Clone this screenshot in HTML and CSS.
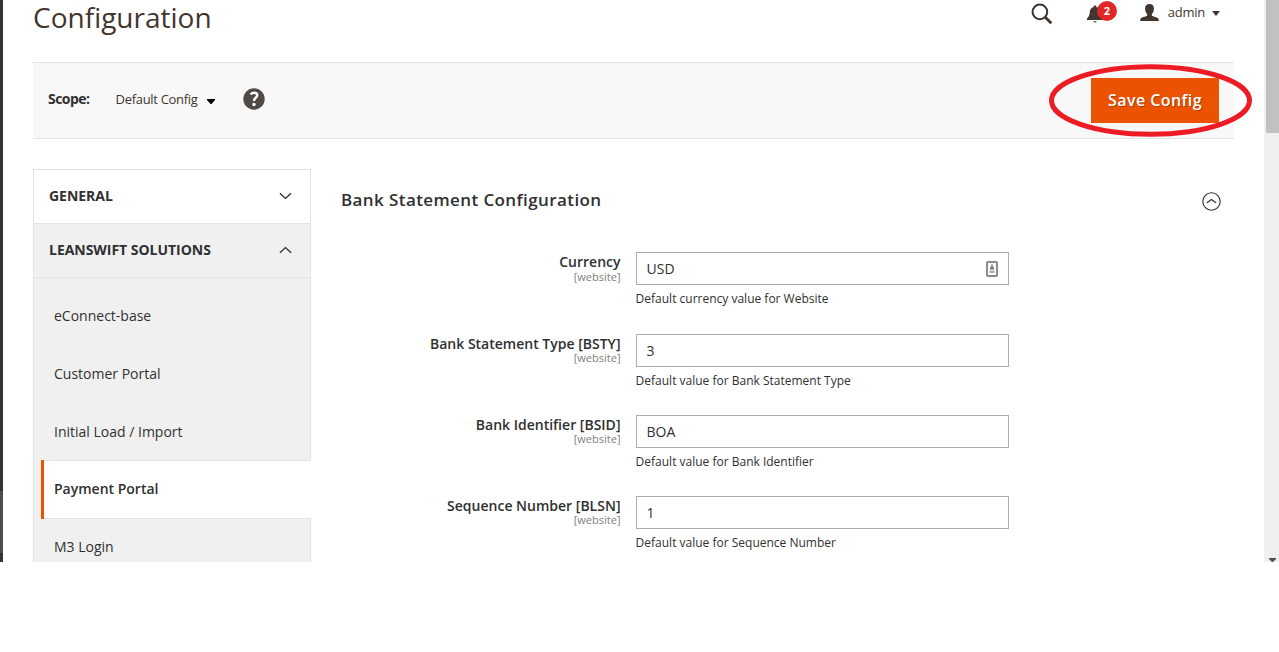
FILE: index.html
```html
<!DOCTYPE html>
<html lang="en">
<head>
<meta charset="utf-8">
<title>Configuration</title>
<link rel="stylesheet" href="styles.css">
</head>
<body>
<div class="app">
  <div class="menu-edge"><div class="menu-edge-active"></div></div>
  <div class="page">
    <header class="header">
      <h1 class="title"><span>Configuration</span></h1>
      <div class="tools">
        <svg class="icon-search" width="22" height="22" viewBox="0 0 22 22"><circle cx="8.9" cy="8.9" r="7.3" fill="none" stroke="#41362f" stroke-width="2"/><path d="M14 14l6.3 6.2" stroke="#41362f" stroke-width="2.8"/></svg>
        <div class="bell">
          <svg width="17" height="18" viewBox="0 0 17 18"><path d="M8 .5c-1 0-1.400.6-1.400 1.400C4 2.500 2.800 4.700 2.700 7.500C2.600 10.500 1.500 12 0 13.200v1.800h16v-1.800C14.500 12 13.400 10.500 13.300 7.500C13.200 4.700 12 2.500 9.400 1.900C9.400 1.100 9 .5 8 .5zM6.300 16.200c.3.800.9 1.200 1.700 1.200s1.400-.4 1.700-1.200z" fill="#41362f"/></svg>
          <span class="badge">2</span>
        </div>
        <svg class="icon-user" width="19" height="17" viewBox="0 0 19 17.300"><path d="M9.500 0C6.500 0 5 1.700 5 4.500C5 7 5.800 9 7.100 10.200v1.700C5.500 13 1 13.300.3 15.200L0 17.300h19l-.3-2.100C18 13.300 13.500 13 11.900 11.900v-1.700C13.200 9 14 7 14 4.500C14 1.700 12.500 0 9.500 0z" fill="#41362f"/></svg>
        <span class="user-name"><span>admin</span></span>
        <svg class="caret-user" width="8" height="5" viewBox="0 0 8 5"><path d="M0 0h8L4 5z" fill="#41362f"/></svg>
      </div>
    </header>

    <div class="toolbar">
      <span class="scope-label"><span>Scope:</span></span>
      <span class="scope-value"><span>Default Config</span></span>
      <svg class="caret-scope" width="8" height="5" viewBox="0 0 8 5"><path d="M0 0h8v1L4.500 5h-1L0 1z" fill="#000"/></svg>
      <svg class="help" width="22" height="22" viewBox="0 0 22 22"><circle cx="11" cy="11" r="10.700" fill="#514943"/><path d="M7.600 6.300C8.500 5.400 9.700 4.800 11.100 4.800c2 0 3.100 1 3.100 2.500c0 1.300-.7 2-1.700 2.700c-.9.700-1.400 1.200-1.400 2.500v.6" fill="none" stroke="#fff" stroke-width="2.500"/><circle cx="11" cy="16.500" r="1.700" fill="#fff"/></svg>
      <div class="save-wrap">
        <button class="save"><span>Save Config</span></button>
        <svg class="marker" width="204" height="74" viewBox="0 0 204 74"><ellipse cx="101.500" cy="36.500" rx="99" ry="33.700" fill="none" stroke="#ed1c24" stroke-width="5"/></svg>
      </div>
    </div>

    <div class="columns">
      <nav class="sidebar">
        <div class="section">
          <span>GENERAL</span>
          <svg width="13" height="8" viewBox="0 0 14 8"><path d="M1 1l6 5.600L13 1" fill="none" stroke="#303030" stroke-width="1.500"/></svg>
        </div>
        <div class="section open">
          <span>LEANSWIFT SOLUTIONS</span>
          <svg width="13" height="8" viewBox="0 0 14 8"><path d="M1 7l6-5.600L13 7" fill="none" stroke="#303030" stroke-width="1.500"/></svg>
        </div>
        <div class="items">
          <a class="item first"><span>eConnect-base</span></a>
          <a class="item"><span>Customer Portal</span></a>
          <a class="item"><span>Initial Load / Import</span></a>
          <a class="item active"><span>Payment Portal</span></a>
          <a class="item"><span>M3 Login</span></a>
        </div>
      </nav>

      <main class="content">
        <div class="group-head">
          <h2><span>Bank Statement Configuration</span></h2>
          <svg width="19" height="19" viewBox="0 0 19 19"><circle cx="9.500" cy="9.500" r="8.700" fill="none" stroke="#303030" stroke-width="1.100"/><path d="M4.900 10.800l4.600-3.300 4.600 3.300" fill="none" stroke="#303030" stroke-width="1.200"/></svg>
        </div>
        <div class="field first">
          <div class="label"><span class="name">Currency</span><span class="level">[website]</span></div>
          <div class="control">
            <div class="input"><span>USD</span>
              <svg width="12" height="16" viewBox="0 0 12 16"><rect x="1" y="1" width="10" height="14" rx="1" fill="#fff" stroke="#8c8c8c" stroke-width="2"/><path d="M5.300 3.500h1.400V5.500l1.300 1v2H4v-2l1.300-1z" fill="#777"/><path d="M3.500 9.500h5v2.500h-5z" fill="#aaa"/></svg>
            </div>
            <p class="note"><span>Default currency value for Website</span></p>
          </div>
        </div>
        <div class="field">
          <div class="label"><span class="name">Bank Statement Type [BSTY]</span><span class="level">[website]</span></div>
          <div class="control"><div class="input"><span>3</span></div><p class="note"><span>Default value for Bank Statement Type</span></p></div>
        </div>
        <div class="field">
          <div class="label"><span class="name">Bank Identifier [BSID]</span><span class="level">[website]</span></div>
          <div class="control"><div class="input"><span>BOA</span></div><p class="note"><span>Default value for Bank Identifier</span></p></div>
        </div>
        <div class="field">
          <div class="label"><span class="name">Sequence Number [BLSN]</span><span class="level">[website]</span></div>
          <div class="control"><div class="input"><span>1</span></div><p class="note"><span>Default value for Sequence Number</span></p></div>
        </div>
      </main>
    </div>
  </div>
  <div class="scrollbar">
    <div class="thumb"></div>
    <svg width="7" height="4" viewBox="0 0 7 4"><path d="M0 0h7v1L4 4H3L0 1z" fill="#505050"/></svg>
  </div>
</div>
</body>
</html>
```
FILE: styles.css
```css
* { box-sizing: border-box; }

body {
  margin: 0;
  background: #fff;
  color: #303030;
  font-family: "Open Sans", "Noto Sans", sans-serif;
  font-size: 14px;
  line-height: 20px;
}

h1, h2, p { margin: 0; }
svg { display: block; flex: none; }
span { white-space: nowrap; }

.app {
  display: grid;
  grid-template-columns: 3px 1fr 15px;
  grid-template-rows: 562px;
  height: 562px;
  overflow: hidden;
}

.menu-edge { background: #373330; padding-top: 491px; }
.menu-edge-active { height: 62px; background: #524d49; }

.page { padding: 0 30px; min-width: 0; }

/* Header */
.header { display: flex; justify-content: space-between; height: 62px; }
.title { font-size: 28px; font-weight: 400; line-height: 34px; color: #41362f; }
.tools { display: flex; align-items: flex-start; padding-right: 14px; }
.icon-search { margin-top: 3px; }
.bell { position: relative; margin: 5px 0 0 34px; width: 17px; }
.badge {
  position: absolute;
  left: 10px;
  top: -4px;
  width: 20px;
  height: 20px;
  border-radius: 10px;
  background: #e22626;
  color: #fff;
  font-size: 11px;
  font-weight: 700;
  line-height: 20px;
  text-align: center;
}
.icon-user { margin: 4px 0 0 36px; }
.user-name { margin: 2px 0 0 9px; font-size: 13px; letter-spacing: -.25px; color: #41362f; }
.caret-user { margin: 11px 0 0 7px; }

/* Scope toolbar */
.toolbar {
  display: flex;
  align-items: center;
  height: 77px;
  padding: 0 15px;
  background: #f8f8f8;
  border-top: 1px solid #e3e3e3;
  border-bottom: 1px solid #e3e3e3;
}
.scope-label { width: 67.5px; margin-top: -3px; font-weight: 700; letter-spacing: -.55px; }
.scope-value { width: 91.5px; margin-top: -3px; font-size: 13px; letter-spacing: -.3px; color: #41362f; }
.caret-scope { margin-top: 2px; }
.help { margin: -3px 0 0 28px; }
.save-wrap { position: relative; margin-left: auto; }
.save {
  display: block;
  width: 128px;
  height: 45px;
  padding: 0;
  border: 0;
  background: #eb5202;
  color: #fff;
  font: 600 16px/45px "Open Sans", sans-serif;
  letter-spacing: .45px;
  text-shadow: 1px 1px 0 rgba(0, 0, 0, .25);
}
.marker { position: absolute; left: -42px; top: -14px; }

.columns { display: flex; gap: 30px; padding-top: 30px; }

/* Configuration sections */
.sidebar { width: 278px; flex: none; }
.section {
  display: flex;
  align-items: center;
  justify-content: space-between;
  height: 54px;
  padding: 0 18px 2px 15px;
  border: 1px solid #e3e3e3;
  border-bottom: 0;
  font-weight: 700;
  letter-spacing: -.03px;
}
.section.open { background: #f0f0f0; }
.items { border-top: 1px solid #e3e3e3; border-left: 1px solid #e3e3e3; background: #f0f0f0; }
.item {
  display: flex;
  align-items: center;
  height: 58px;
  padding-left: 20px;
  border-right: 1px solid #e3e3e3;
}
.item.first { height: 67px; padding-top: 9px; }
.item.active {
  height: 59px;
  margin: -1px 0 0 7px;
  padding: 0 0 1px 10px;
  background: linear-gradient(#e3e3e3, #e3e3e3) top / 100% 1px no-repeat, linear-gradient(#e3e3e3, #e3e3e3) bottom / 100% 1px no-repeat, #fff;
  border: 0;
  border-left: 3px solid #eb5202;
  font-weight: 600;
}
.item.active + .item { height: 56px; }

/* Fields */
.content { flex: 1; min-width: 0; }
.group-head { display: flex; justify-content: space-between; align-items: center; height: 62px; padding-right: 13px; }
.group-head h2 { font-size: 17px; font-weight: 600; letter-spacing: .4px; }
.group-head svg { margin-top: 2px; }
.field { display: flex; height: 81px; }
.field.first { height: 82px; margin-top: 21px; }
.label { width: 279.5px; display: flex; flex-direction: column; align-items: flex-end; }
.name { line-height: 19px; font-weight: 600; }
.level { font-size: 11px; line-height: 11px; color: #808080; }
.field:not(.first) .level { line-height: 9px; }
.control { margin-left: 15.5px; width: 373px; }
.input {
  display: flex;
  align-items: center;
  justify-content: space-between;
  height: 33px;
  padding: 0 10px 0 9.5px;
  border: 1px solid #adadad;
  background: #fff;
}
.note { margin: 5px 0 0 -.4px; font-size: 12px; line-height: 18px; }

.scrollbar { background: #f0f0f0; display: flex; flex-direction: column; justify-content: space-between; }
.thumb { width: 13px; height: 133px; margin-left: 2px; background: #c1c1c1; }
.scrollbar svg { margin-left: 5px; }
```
